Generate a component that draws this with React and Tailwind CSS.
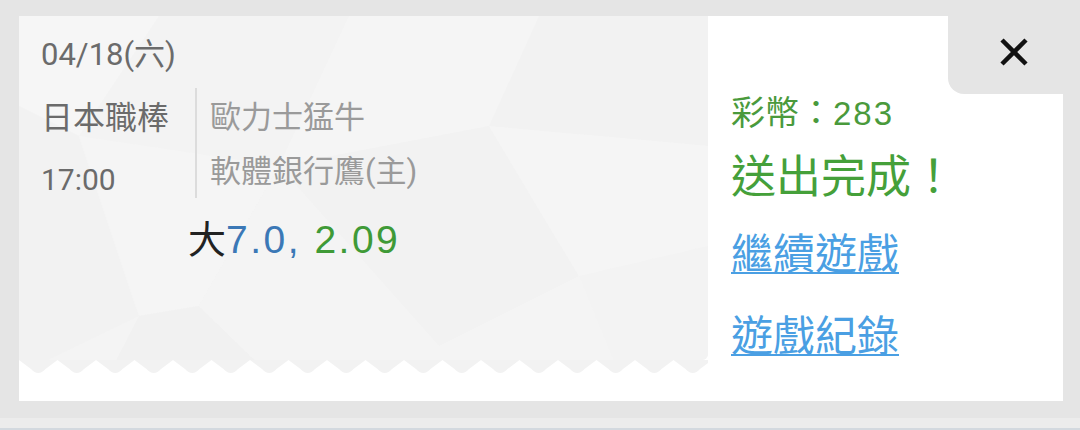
import React from 'react';

const FONT = "font-[Roboto,'Noto_Sans_CJK_TC','Noto_Sans',sans-serif]";
const DIGITS = "font-['Liberation_Sans',Arial,sans-serif]";

function Texture() {
  // faint low-poly backdrop of the ticket
  return (
    <svg className="absolute inset-0" width="689" height="358" viewBox="0 0 689 358">
      <polygon points="0,0 140,0 60,120 0,90" fill="#f6f6f6" />
      <polygon points="140,0 330,0 260,150 60,120" fill="#f3f3f3" />
      <polygon points="330,0 520,0 470,110 260,150" fill="#f5f5f5" />
      <polygon points="520,0 689,0 689,130 470,110" fill="#f2f2f2" />
      <polygon points="0,90 60,120 120,300 0,358" fill="#f2f2f2" />
      <polygon points="60,120 260,150 180,290 120,300" fill="#f5f5f5" />
      <polygon points="260,150 470,110 560,260 420,330" fill="#f2f2f2" />
      <polygon points="470,110 689,130 689,230 560,260" fill="#f5f5f5" />
      <polygon points="120,300 180,290 250,358 90,358" fill="#f1f1f1" />
      <polygon points="180,290 260,150 420,330 360,358 250,358" fill="#f4f4f4" />
      <polygon points="560,260 689,230 689,358 600,358" fill="#f3f3f3" />
      <polygon points="420,330 560,260 600,358 360,358" fill="#f4f4f4" />
    </svg>
  );
}

function Zigzag() {
  const period = 38.5;
  const n = Math.ceil(689 / period);
  let d = 'M0,0';
  for (let i = 0; i < n; i++) {
    const x = i * period;
    d += ` L${x + 12},9 Q${x + 19.25},17 ${x + 26.5},9 L${x + period},0`;
  }
  d += ' Z';
  return (
    <svg width="689" height="15" viewBox="0 0 689 15" className="block">
      <path d={d} fill="#f2f2f2" />
    </svg>
  );
}

export default function App() {
  return (
    <div className={`w-[1080px] h-[430px] bg-[#e5e5e5] overflow-hidden ${FONT}`}>
      <div className="ml-[19px] mt-[16px] w-[1044px] h-[385px] bg-white flex relative">
        {/* ticket */}
        <div className="w-[689px] flex flex-col">
          <div className="relative h-[344px] bg-[#f4f4f4] overflow-hidden rounded-br-[6px]">
            <Texture />
            <div className="relative pl-[22px] pt-[21px]">
              <div className="h-[36px] leading-[36px] text-[31px] text-[#6b6b6b]">04/18(六)</div>
              <div className="mt-[15px] flex h-[110px]">
                <div className="w-[154px] text-[32px] text-[#6b6b6b]">
                  <div className="mt-[12px] h-[36px] leading-[36px]">日本職棒</div>
                  <div className="mt-[26px] h-[36px] leading-[36px] text-[30px]">17:00</div>
                </div>
                <div className="border-l-2 border-[#dcdcdc] pl-[13px] text-[31px] text-[#9a9a9a]">
                  <div className="mt-[12px] h-[36px] leading-[36px]">歐力士猛牛</div>
                  <div className="mt-[18px] h-[36px] leading-[36px]">軟體銀行鷹(主)</div>
                </div>
              </div>
              <div className="mt-[20px] ml-[147px] h-[44px] leading-[44px] text-[38px]">
                <span className="text-[#222222]">大</span>
                <span className={`${DIGITS} text-[#3b78b6] text-[39px] tracking-[2.5px]`}>7.0, </span>
                <span className={`${DIGITS} text-[#3f9a37] text-[39px] tracking-[2.5px]`}>2.09</span>
              </div>
            </div>
          </div>
          <Zigzag />
        </div>

        {/* result */}
        <div className="flex-1 pl-[23px] pt-[79px]">
          <div className="h-[36px] leading-[36px] text-[34px] text-[#4a9a3c]">
            彩幣：<span className={`${DIGITS} text-[33px] tracking-[2px]`}>283</span>
          </div>
          <div className="mt-[21px] h-[52px] leading-[52px] text-[45px] text-[#45a03a]">送出完成！</div>
          <a className="block w-fit mt-[26px] h-[50px] leading-[50px] text-[42px] text-[#4a9fe3] underline decoration-2 underline-offset-[3px]">繼續遊戲</a>
          <a className="block w-fit mt-[32px] h-[50px] leading-[50px] text-[42px] text-[#4a9fe3] underline decoration-2 underline-offset-[3px]">遊戲紀錄</a>
        </div>

        {/* close tab */}
        <div className="absolute top-0 right-0 w-[115px] h-[78px] bg-[#e5e5e5] rounded-bl-[16px] pl-[52px] pt-[22px]">
          <svg width="28" height="28" viewBox="0 0 28 28">
            <path d="M2 2 L26 26 M26 2 L2 26" stroke="#111" strokeWidth="4.5" />
          </svg>
        </div>
      </div>
      <div className="mt-[17px] h-[12px] bg-[#ececec] border-b-2 border-[#d3d9df]" />
    </div>
  );
}
